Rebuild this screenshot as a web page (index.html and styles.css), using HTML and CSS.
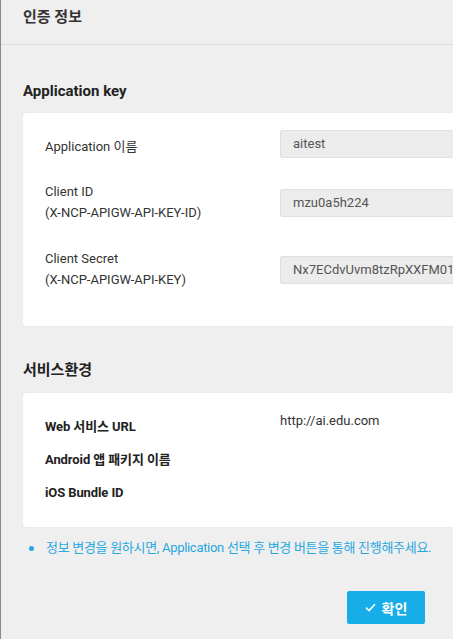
FILE: index.html
```html
<!DOCTYPE html>
<html lang="ko">
<head>
<meta charset="utf-8">
<link rel="stylesheet" href="styles.css">
</head>
<body>
<div class="page">
  <header class="header">인증 정보</header>

  <h2 class="section-title first">Application key</h2>
  <div class="card card-keys">
    <div class="row row-1">
      <div class="label">Application 이름</div>
      <div class="input">aitest</div>
    </div>
    <div class="row">
      <div class="label">Client ID<br>(X-NCP-APIGW-API-KEY-ID)</div>
      <div class="input">mzu0a5h224</div>
    </div>
    <div class="row">
      <div class="label">Client Secret<br>(X-NCP-APIGW-API-KEY)</div>
      <div class="input">Nx7ECdvUvm8tzRpXXFM01</div>
    </div>
  </div>

  <h2 class="section-title second">서비스환경</h2>
  <div class="card card-env">
    <div class="env-row">
      <div class="env-label">Web 서비스 URL</div>
      <div class="env-value">http://ai.edu.com</div>
    </div>
    <div class="env-row">
      <div class="env-label">Android 앱 패키지 이름</div>
      <div class="env-value"></div>
    </div>
    <div class="env-row">
      <div class="env-label">iOS Bundle ID</div>
      <div class="env-value"></div>
    </div>
  </div>

  <ul class="notes">
    <li>정보 변경을 원하시면, Application 선택 후 변경 버튼을 통해 진행해주세요.</li>
  </ul>

  <div class="actions">
    <button class="btn-confirm" type="button">
      <svg class="check" width="11" height="9" viewBox="0 0 11 9" aria-hidden="true"><path d="M1 4.6 L4 7.5 L10 1.3" fill="none" stroke="#fff" stroke-width="1.6"/></svg>
      <span>확인</span>
    </button>
  </div>
</div>
</body>
</html>
```

FILE: styles.css
```css
html, body {
  margin: 0;
  padding: 0;
  background: #efefef;
  overflow: hidden;
}

body {
  font-family: Roboto, "Noto Sans CJK KR", "Noto Sans", sans-serif;
  color: #333;
}

.page {
  width: 452px;
  min-height: 639px;
  border-left: 1px solid #8a8a8a;
  background: #efefef;
}

.header {
  height: 45px;
  box-sizing: border-box;
  padding: 0 22px;
  line-height: 34px;
  font-size: 15px;
  font-weight: 700;
  color: #333;
  border-bottom: 1px solid #dcdcdc;
}

.section-title {
  margin: 0;
  padding: 0 22px;
  font-size: 15px;
  font-weight: 700;
  line-height: 20px;
  color: #222;
}

.section-title.first {
  margin-top: 36px;
  margin-bottom: 12px;
}

.section-title.second {
  margin-top: 34px;
  margin-bottom: 13px;
}

.card {
  margin-left: 22px;
  margin-right: -80px;
  background: #fff;
  border-radius: 3px;
  box-shadow: 0 0 1px rgba(0, 0, 0, 0.12);
}

.card-keys {
  padding: 17px 0 37px 22px;
  display: flex;
  flex-direction: column;
  gap: 23px;
  height: 213px;
  box-sizing: border-box;
}

.row {
  display: flex;
  align-items: center;
}

.label {
  width: 235px;
  flex: none;
  font-size: 13px;
  line-height: 21px;
  color: #333;
  padding-bottom: 2px;
}

.row-1 .label {
  padding-bottom: 0;
  padding-top: 4px;
}

.input {
  flex: 1;
  height: 28px;
  box-sizing: border-box;
  padding: 0 12px;
  line-height: 26px;
  font-size: 13px;
  color: #555;
  background: #ececec;
  border: 1px solid #e0e0e0;
  border-radius: 2px;
  white-space: nowrap;
  overflow: hidden;
}

.card-env {
  height: 134px;
  box-sizing: border-box;
  padding: 24px 0 0 22px;
  display: flex;
  flex-direction: column;
  gap: 13px;
}

.env-row {
  display: flex;
  height: 20px;
}

.env-label {
  width: 235px;
  flex: none;
  font-size: 13px;
  font-weight: 700;
  line-height: 20px;
  color: #222;
  letter-spacing: -0.1px;
}

.env-value {
  font-size: 13px;
  line-height: 20px;
  color: #333;
  margin-top: -6px;
}

.notes {
  margin: 11px 0 0;
  padding: 0 0 0 45px;
  list-style: none;
}

.notes li {
  position: relative;
  font-size: 13px;
  line-height: 20px;
  color: #28a8e0;
  letter-spacing: -0.3px;
  white-space: nowrap;
}

.notes li::before {
  content: "";
  position: absolute;
  left: -17px;
  top: 8px;
  width: 5px;
  height: 5px;
  border-radius: 50%;
  background: #28a8e0;
}

.actions {
  display: flex;
  justify-content: flex-end;
  padding-right: 28px;
  margin-top: 33px;
}

.btn-confirm {
  width: 78px;
  height: 33px;
  border: 0;
  border-radius: 2px;
  background: #16ade8;
  color: #fff;
  font-family: Roboto, "Noto Sans CJK KR", sans-serif;
  font-size: 14px;
  font-weight: 700;
  display: flex;
  align-items: center;
  justify-content: center;
  gap: 6px;
  padding: 0;
}

.check {
  display: block;
}
```
